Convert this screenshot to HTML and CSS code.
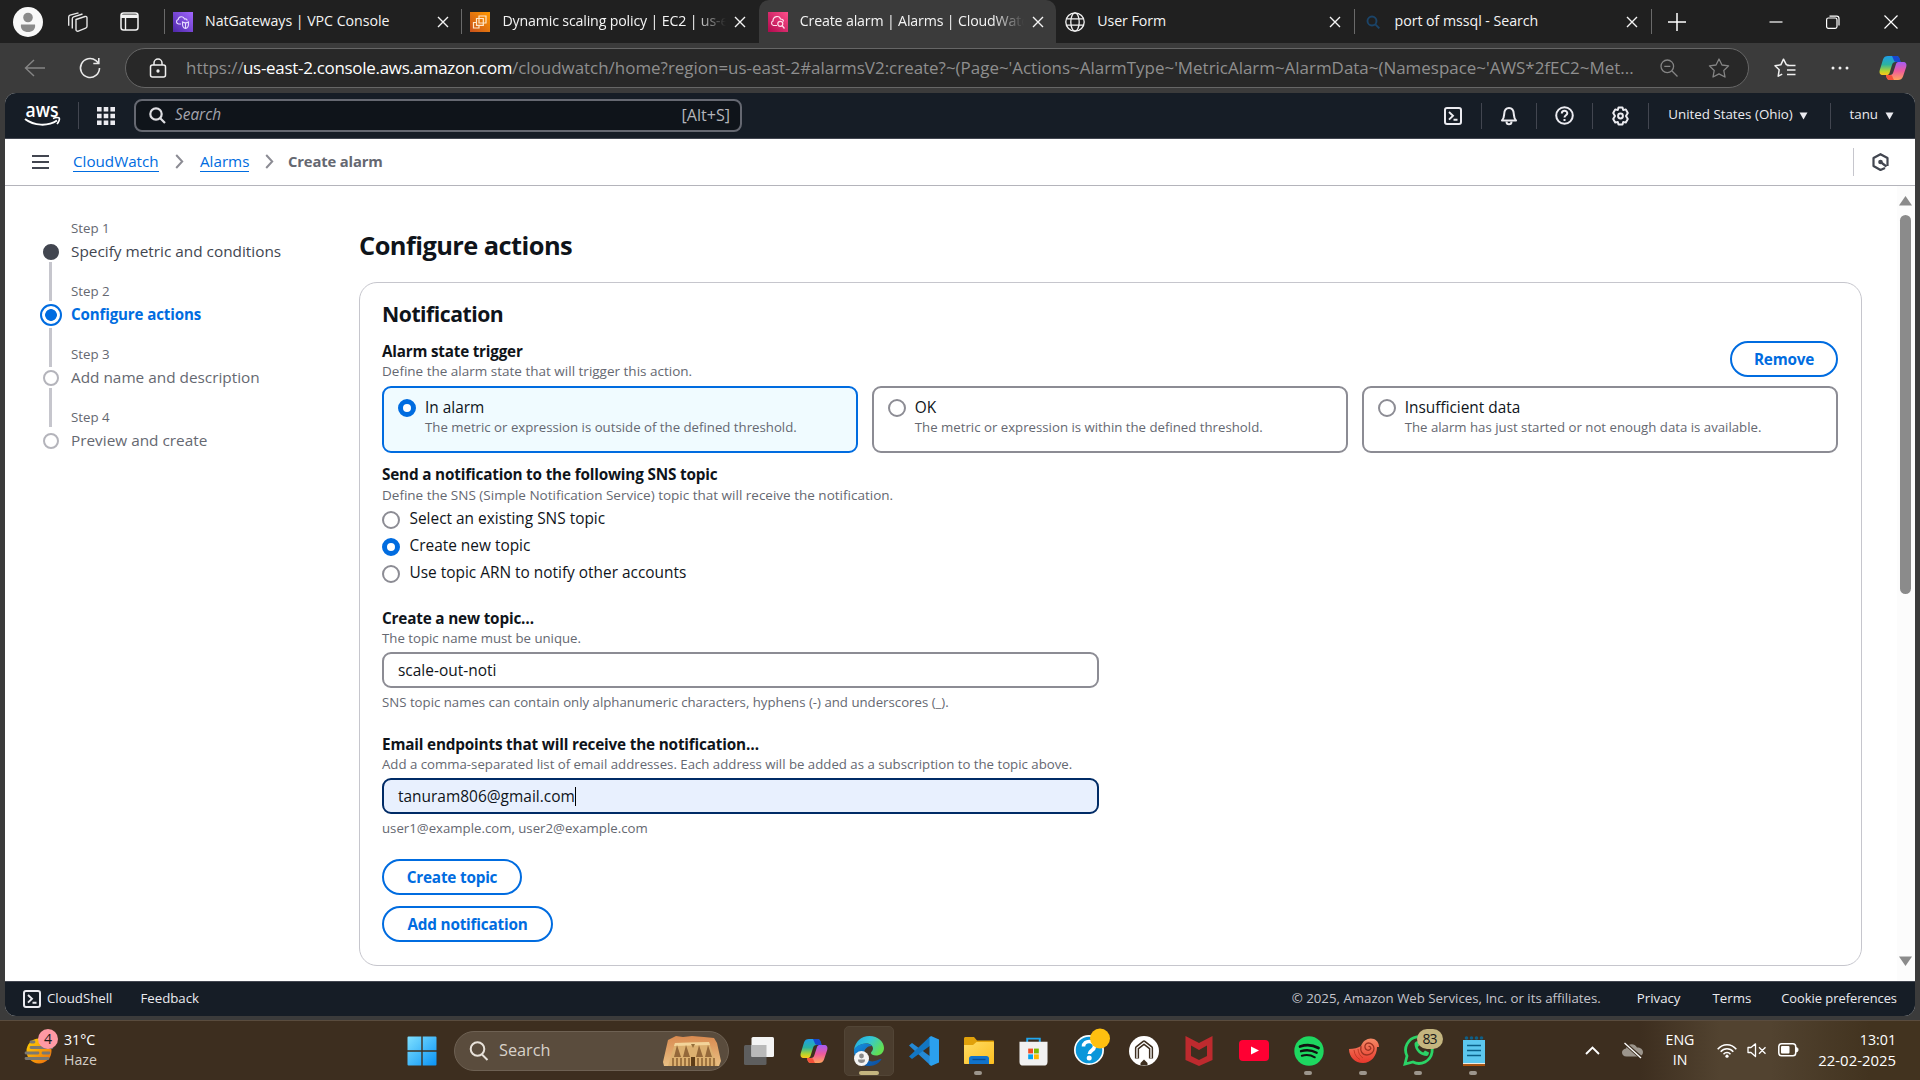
FILE: index.html
```html
<!DOCTYPE html>
<html lang="en">
<head>
<meta charset="utf-8">
<title>Create alarm | Alarms | CloudWatch</title>
<link rel="stylesheet" href="styles.css">
</head>
<body>
<svg class="defs" width="0" height="0" aria-hidden="true">
  <defs>
    <linearGradient id="cpA" x1="0" y1="0" x2="0" y2="1"><stop offset="0" stop-color="#1f9de8"/><stop offset=".45" stop-color="#2bb3a0"/><stop offset=".8" stop-color="#b8d52c"/><stop offset="1" stop-color="#ffc61a"/></linearGradient>
    <linearGradient id="cpB" x1="0" y1="0" x2="0" y2="1"><stop offset="0" stop-color="#a35cf5"/><stop offset=".5" stop-color="#ee5a9c"/><stop offset="1" stop-color="#ffa45c"/></linearGradient>
    <linearGradient id="vpc" x1="0" y1="1" x2="1" y2="0"><stop offset="0" stop-color="#4d27a8"/><stop offset="1" stop-color="#a166ff"/></linearGradient>
    <linearGradient id="ec2" x1="0" y1="1" x2="1" y2="0"><stop offset="0" stop-color="#c8511b"/><stop offset="1" stop-color="#ff9900"/></linearGradient>
    <linearGradient id="cw" x1="0" y1="1" x2="1" y2="0"><stop offset="0" stop-color="#b0084d"/><stop offset="1" stop-color="#ff4f8b"/></linearGradient>
    <linearGradient id="win" x1="0" y1="0" x2="1" y2="1"><stop offset="0" stop-color="#7fe0ff"/><stop offset="1" stop-color="#0a93f5"/></linearGradient>
    <linearGradient id="sun" x1="0" y1="0" x2="1" y2="1"><stop offset="0" stop-color="#ffd400"/><stop offset="1" stop-color="#ee6a10"/></linearGradient>
    <linearGradient id="edgeA" x1="0" y1="0" x2="1" y2=".5"><stop offset="0" stop-color="#1fa6e0"/><stop offset=".5" stop-color="#33c6d8"/><stop offset="1" stop-color="#62e052"/></linearGradient>
    <linearGradient id="edgeB" x1="0" y1="0" x2="1" y2="1"><stop offset="0" stop-color="#1590e0"/><stop offset="1" stop-color="#0c4a9c"/></linearGradient>
    <linearGradient id="fold" x1="0" y1="0" x2="1" y2="1"><stop offset="0" stop-color="#ffdc63"/><stop offset="1" stop-color="#fdbf20"/></linearGradient>
    <linearGradient id="shell" x1="0" y1="0" x2="0" y2="1"><stop offset="0" stop-color="#f58a66"/><stop offset="1" stop-color="#e8372c"/></linearGradient>
    <linearGradient id="rock" x1="0" y1="0" x2="0" y2="1"><stop offset="0" stop-color="#d98a50"/><stop offset="1" stop-color="#e9c084"/></linearGradient>
    <symbol id="x" viewBox="0 0 12 12"><path d="M1 1L11 11M11 1L1 11" fill="none" stroke="currentColor" stroke-width="1.400"/></symbol>
    <symbol id="caret" viewBox="0 0 10 9"><path d="M.5 .5h9L5 8.500z" fill="currentColor"/></symbol>
    <symbol id="terminal" viewBox="0 0 18 18"><rect x="1" y="1" width="16" height="16" rx="2" fill="none" stroke="currentColor" stroke-width="2"/><path d="M5 5l4 3.800L5 12.600M9.500 12.800h4" fill="none" stroke="currentColor" stroke-width="1.900"/></symbol>
    <symbol id="crumb" viewBox="0 0 9 15"><path d="M1.200 1l6 6.500-6 6.500" fill="none" stroke="#8c8c94" stroke-width="2"/></symbol>
    <symbol id="copilot" viewBox="0 0 28 26">
      <path d="M9 1h8c2 0 3 1 3.500 3l1 3h-5c-2 0-3 1-3.500 3l-2.500 8c-.5 1.500-1.500 2-3 2H4c-3 0-4-2-3.200-5L4 4.500C4.800 2 6.500 1 9 1z" fill="url(#cpA)"/>
      <path d="M13 1h4.500c1.800 0 2.800 1 3.300 3l.9 3h-4.500c-1.500 0-2.400-1-2.800-3z" fill="#1747cf"/>
      <path d="M19 25h-8c-2 0-3-1-3.500-3l-.6-2h4c2 0 3-1 3.500-3l2.600-8c.5-1.500 1.500-2 3-2h4c3 0 4 2 3.200 5L24 21.500c-.8 2.500-2.500 3.500-5 3.500z" fill="url(#cpB)"/>
      <path d="M15 25h-4c-2 0-3-1-3.500-3l-.6-2h4c2 0 2.600 1 3 3z" fill="#f4513a"/>
    </symbol>
  </defs>
</svg>

<div class="browser">
  <header class="tabstrip">
    <div class="strip-left">
      <svg class="avatar" width="30" height="30" viewBox="0 0 30 30"><circle cx="15" cy="15" r="15" fill="#f8f8f8"/><circle cx="15" cy="10.500" r="4.800" fill="#8a8a8a"/><path d="M8 17.500h14c1 5-3 7.500-7 7.500s-8-2.500-7-7.500z" fill="#8a8a8a"/></svg>
      <svg class="spaces" width="22" height="20" viewBox="0 0 22 20" fill="none" stroke="#e6e6e6" stroke-width="1.400"><path d="M9 7.500l9-3c1-.3 2 .2 2 1.300v8.500c0 1-.5 1.600-1.300 1.900l-7.400 2.900c-1.200.4-2.300-.2-2.300-1.400z"/><path d="M5.300 16.500V6.700c0-1 .5-1.500 1.300-1.800L15.500 2M1.700 13.800V5c0-1 .5-1.500 1.300-1.800L11.500.8"/></svg>
      <svg class="tabact" width="19" height="19" viewBox="0 0 19 19"><rect x="1" y="1" width="17" height="17" rx="2.500" fill="none" stroke="#f2f2f2" stroke-width="1.500"/><path d="M1 2.500h17v3.500H1z" fill="#f2f2f2"/><path d="M5.500 5v13" stroke="#f2f2f2" stroke-width="1.400"/></svg>
    </div>
    <div class="tab">
      <svg width="20" height="20" viewBox="0 0 20 20"><path d="M0 0h20v20H0z" fill="url(#vpc)"/><g fill="none" stroke="#e6dcff" stroke-width="1.100"><path d="M8 12H5.500a2.300 2.300 0 0 1-.3-4.500C5.500 4.500 10.500 3.500 11.500 7c1.500-.3 2.500.5 2.800 1.500"/><path d="M9.500 10c1.800 1 4.200 1 6 0v2c0 2.500-1 4-3 4.500-2-.5-3-2-3-4.500zM12.500 10.500V16"/></g></svg>
      <span class="tab-title">NatGateways | VPC Console</span>
      <svg class="tab-x" width="12" height="12"><use href="#x"/></svg>
    </div>
    <div class="tab">
      <svg width="20" height="20" viewBox="0 0 20 20"><path d="M0 0h20v20H0z" fill="url(#ec2)"/><g fill="none" stroke="#ffe7c9" stroke-width="1.200"><path d="M9 4h7v7H9z"/><path d="M6.500 6.500h6.800v6.800H6.500zM6 10.500H3.500V16H9v-2"/></g></svg>
      <span class="tab-title faded">Dynamic scaling policy | EC2 | us-e</span>
      <svg class="tab-x" width="12" height="12"><use href="#x"/></svg>
    </div>
    <div class="tab active">
      <svg width="20" height="20" viewBox="0 0 20 20"><path d="M0 0h20v20H0z" fill="url(#cw)"/><g fill="none" stroke="#ffe0ec" stroke-width="1.200"><path d="M9 13.500H5.500C3 13 3 9.500 5 9c0-5 6.500-6 7.500-2 2 0 3 1 3 2.500"/><circle cx="12.300" cy="11.800" r="2.500"/><path d="M14 13.500l2.500 3"/></g></svg>
      <span class="tab-title faded">Create alarm | Alarms | CloudWatc</span>
      <svg class="tab-x" width="12" height="12"><use href="#x"/></svg>
    </div>
    <div class="tab bare">
      <svg width="20" height="20" viewBox="0 0 20 20" fill="none" stroke="#f2f2f2" stroke-width="1.300"><circle cx="10" cy="10" r="9.200"/><ellipse cx="10" cy="10" rx="4.200" ry="9.200"/><path d="M1.500 6.800h17M1.500 13.200h17"/></svg>
      <span class="tab-title">User Form</span>
      <svg class="tab-x" width="12" height="12"><use href="#x"/></svg>
    </div>
    <div class="tab">
      <svg width="20" height="20" viewBox="0 0 20 20" fill="none" stroke="#1b4468" stroke-width="1.900"><circle cx="9" cy="9" r="4.500"/><path d="M12.300 12.300l4 4"/></svg>
      <span class="tab-title">port of mssql - Search</span>
      <svg class="tab-x" width="12" height="12"><use href="#x"/></svg>
    </div>
    <div class="strip-right">
      <svg width="18" height="18" viewBox="0 0 18 18" stroke="#fff" stroke-width="1.500"><path d="M9 0v18M0 9h18"/></svg>
      <svg class="wmin" width="14" height="14" viewBox="0 0 14 14" stroke="#fff" stroke-width="1.200"><path d="M.5 7h13"/></svg>
      <svg class="wmax" width="14" height="14" viewBox="0 0 14 14" fill="none" stroke="#fff" stroke-width="1.200"><rect x=".6" y="3" width="10.400" height="10.400" rx="1.800"/><path d="M3.500 1.200h7.200a2.300 2.300 0 0 1 2.300 2.300v7"/></svg>
      <svg class="wclose" width="14" height="14" viewBox="0 0 14 14" stroke="#fff" stroke-width="1.200"><path d="M.5.500l13 13M13.500.500l-13 13"/></svg>
    </div>
  </header>

  <div class="toolbar">
    <svg class="back" width="22" height="18" viewBox="0 0 22 18" fill="none" stroke="#858585" stroke-width="1.400"><path d="M21 9H1.500M10 1L1.500 9l8.500 8"/></svg>
    <svg class="reload" width="22" height="22" viewBox="0 0 22 22" fill="none" stroke="#e8e8e8" stroke-width="1.600"><path d="M20.500 11A9.500 9.500 0 1 1 17 3.600L19.500 6M19.800 1v5.500h-5.500"/></svg>
    <div class="address">
      <svg width="18" height="20" viewBox="0 0 18 20" fill="none" stroke="#f0f0f0" stroke-width="1.500"><rect x="1.500" y="7" width="15" height="12" rx="2"/><path d="M5 7V5a4 4 0 0 1 8 0v2"/><circle cx="9" cy="13" r=".9" fill="#f0f0f0"/></svg>
      <div class="url"><span class="scheme">https://</span><span class="host">us-east-2.console.aws.amazon.com</span><span class="path">/cloudwatch/home?region=us-east-2#alarmsV2:create?~(Page~'Actions~AlarmType~'MetricAlarm~AlarmData~(Namespace~'AWS*2fEC2~Met...</span></div>
      <svg class="zoomout" width="18" height="18" viewBox="0 0 18 18" fill="none" stroke="#858585" stroke-width="1.300"><circle cx="7.300" cy="7.300" r="6.300"/><path d="M12 12l5.500 5.500M4.300 7.300h6"/></svg>
      <svg class="star" width="22" height="20" viewBox="0 0 22 20" fill="none" stroke="#858585" stroke-width="1.300" stroke-linejoin="round"><path d="M11 1l3 6 6.600.9-4.800 4.600 1.200 6.500-6-3.100L5 19l1.200-6.500L1.400 7.900 8 7z"/></svg>
    </div>
    <svg class="favs" width="22" height="20" viewBox="0 0 22 20" fill="none" stroke="#f0f0f0" stroke-width="1.500" stroke-linejoin="round"><path d="M14.500 7L12.300 6.700 9.500 1.200 6.800 6.800 1 7.700l4.200 4-1 6.500 4-2M13 7.500h8.500M13 12h8.500M13 16.500h8.500"/></svg>
    <svg class="dots" width="18" height="4" viewBox="0 0 18 4" fill="#f0f0f0"><circle cx="2" cy="2" r="1.500"/><circle cx="9" cy="2" r="1.500"/><circle cx="16" cy="2" r="1.500"/></svg>
    <svg class="cop" width="28" height="26"><use href="#copilot"/></svg>
  </div>

  <div class="page">
    <nav class="aws-nav">
      <svg class="aws-logo" width="37" height="25" viewBox="0 0 37 25"><text x="1.500" y="13.500" class="aws-word" textLength="33" lengthAdjust="spacingAndGlyphs">aws</text><path d="M1 16c9 7 23 7.500 32 1.500" fill="none" stroke="#fff" stroke-width="2"/><path d="M29 15.500c3-1.500 6-1 6.300-.3.500 1-.5 4-2.300 5.800" fill="none" stroke="#fff" stroke-width="1.700"/></svg>
      <i class="vr vr-logo"></i>
      <svg class="grid9" width="18" height="18" viewBox="0 0 18 18" fill="#ebebf0"><path d="M0 0h4.600v4.600H0zM6.700 0h4.600v4.600H6.700zM13.400 0H18v4.600h-4.600zM0 6.700h4.600v4.600H0zM6.700 6.700h4.600v4.600H6.700zM13.400 6.700H18v4.600h-4.600zM0 13.400h4.600V18H0zM6.700 13.400h4.600V18H6.700zM13.400 13.400H18V18h-4.600z"/></svg>
      <div class="aws-search">
        <svg width="17" height="17" viewBox="0 0 17 17" fill="none" stroke="#dedee3" stroke-width="2.200"><circle cx="7" cy="7" r="5.700"/><path d="M11 11l5 5"/></svg>
        <span class="ph">Search</span><span class="kbd">[Alt+S]</span>
      </div>
      <div class="nav-right">
        <span class="cell c1"><svg width="18" height="18"><use href="#terminal"/></svg></span>
        <span class="cell"><svg width="18" height="20" viewBox="0 0 18 20" fill="none" stroke="currentColor" stroke-width="2"><path d="M2 14.500c2-2 2-3.500 2.200-6.500C4.400 4.500 6 2 9 2s4.600 2.500 4.800 6c.2 3 .2 4.500 2.200 6.500z" stroke-linejoin="round"/><path d="M6.500 15.500c0 3.800 5 3.800 5 0"/></svg></span>
        <span class="cell"><svg width="19" height="19" viewBox="0 0 19 19" fill="none" stroke="currentColor" stroke-width="2"><circle cx="9.500" cy="9.500" r="8.300"/><path d="M6.800 7.500c0-3.600 5.600-3.400 5.500-.2 0 2-2.800 2-2.800 4.200M9.500 13v2"/></svg></span>
        <span class="cell"><svg width="19" height="20" viewBox="0 0 19 20" fill="none" stroke="currentColor" stroke-width="2" stroke-linejoin="round"><path d="M7.500 1.500h4l.7 2.600 2.600-.7 2 3.500-1.800 3.100 1.800 3.100-2 3.500-2.600-.7-.7 2.600h-4l-.7-2.600-2.600.7-2-3.500L4 10 2.200 6.900l2-3.500 2.600.7z"/><circle cx="9.500" cy="10" r="2.400"/></svg></span>
        <span class="cell region"><b>United States (Ohio)</b><svg width="9" height="8"><use href="#caret"/></svg></span>
        <span class="cell user"><b>tanu</b><svg width="9" height="8"><use href="#caret"/></svg></span>
      </div>
    </nav>

    <div class="crumbs">
      <svg class="burger" width="17" height="16" viewBox="0 0 17 16" stroke="#424650" stroke-width="2"><path d="M0 2h17M0 8h17M0 14h17"/></svg>
      <a class="lk lk-cw">CloudWatch</a>
      <svg class="sep" width="9" height="15"><use href="#crumb"/></svg>
      <a class="lk lk-al">Alarms</a>
      <svg class="sep" width="9" height="15"><use href="#crumb"/></svg>
      <span class="here">Create alarm</span>
      <div class="crumb-tools"><svg width="17" height="18" viewBox="0 0 17 18" fill="none" stroke="#424650" stroke-width="2.200"><path d="M13 15l-4.500 2L1.500 13V5l7-3.800 7 3.800v8" stroke-linejoin="round"/><circle cx="8.500" cy="9" r="2.300" fill="#424650" stroke="none"/><path d="M8.500 9l6 4.500"/></svg></div>
    </div>

    <div class="body">
      <ol class="steps">
        <li class="step done"><i class="dot"></i><div><small>Step 1</small><span>Specify metric and conditions</span></div></li>
        <li class="step current"><i class="dot"></i><div><small>Step 2</small><span>Configure actions</span></div></li>
        <li class="step"><i class="dot"></i><div><small>Step 3</small><span>Add name and description</span></div></li>
        <li class="step"><i class="dot"></i><div><small>Step 4</small><span>Preview and create</span></div></li>
      </ol>

      <main class="main">
        <h1>Configure actions</h1>
        <section class="card">
          <h2>Notification</h2>
          <div class="row">
            <div>
              <div class="label trig">Alarm state trigger</div>
              <div class="hint h-a">Define the alarm state that will trigger this action.</div>
            </div>
            <button class="btn b-rm">Remove</button>
          </div>
          <div class="tiles">
            <div class="tile on"><i class="radio"></i><div><span class="opt">In alarm</span><span class="hint">The metric or expression is outside of the defined threshold.</span></div></div>
            <div class="tile"><i class="radio"></i><div><span class="opt">OK</span><span class="hint">The metric or expression is within the defined threshold.</span></div></div>
            <div class="tile"><i class="radio"></i><div><span class="opt">Insufficient data</span><span class="hint">The alarm has just started or not enough data is available.</span></div></div>
          </div>
          <div class="label gap-s">Send a notification to the following SNS topic</div>
          <div class="hint h-a">Define the SNS (Simple Notification Service) topic that will receive the notification.</div>
          <div class="options">
            <div class="choice"><i class="radio"></i><span class="opt">Select an existing SNS topic</span></div>
            <div class="choice on"><i class="radio"></i><span class="opt">Create new topic</span></div>
            <div class="choice"><i class="radio"></i><span class="opt">Use topic ARN to notify other accounts</span></div>
          </div>
          <div class="label gap-l">Create a new topic…</div>
          <div class="hint">The topic name must be unique.</div>
          <div class="input">scale-out-noti</div>
          <div class="hint under">SNS topic names can contain only alphanumeric characters, hyphens (-) and underscores (_).</div>
          <div class="label gap-l">Email endpoints that will receive the notification…</div>
          <div class="hint">Add a comma-separated list of email addresses. Each address will be added as a subscription to the topic above.</div>
          <div class="input focus">tanuram806@gmail.com<i class="cursor"></i></div>
          <div class="hint under">user1@example.com, user2@example.com</div>
          <div class="actions">
            <button class="btn b-ct">Create topic</button>
            <button class="btn b-an">Add notification</button>
          </div>
        </section>
      </main>

      <div class="scroll">
        <svg width="13" height="10" viewBox="0 0 13 10"><path d="M6.500 0L13 9.500H0z" fill="#8b8b8b"/></svg>
        <i class="thumb"></i>
        <svg class="down" width="13" height="10" viewBox="0 0 13 10"><path d="M6.500 10L13 .5H0z" fill="#8b8b8b"/></svg>
      </div>
    </div>

    <footer class="foot">
      <svg width="18" height="18"><use href="#terminal"/></svg>
      <span class="cs">CloudShell</span>
      <span class="fb">Feedback</span>
      <span class="copy">© 2025, Amazon Web Services, Inc. or its affiliates.</span>
      <span class="pv">Privacy</span>
      <span class="tm">Terms</span>
      <span class="ck">Cookie preferences</span>
    </footer>
  </div>
</div>

<div class="taskbar">
  <div class="weather">
    <svg width="36" height="36" viewBox="0 0 36 36"><ellipse cx="15" cy="22" rx="12.500" ry="12.500" fill="url(#sun)"/><g stroke="#7b7872" stroke-width="2.800" stroke-linecap="round"><path d="M7 13h3M7 18.500h21M2 24h12M19 24h6M2 29.500h22"/></g><circle cx="24" cy="10" r="10" fill="#ff99a4"/><text x="24" y="15" class="badge-t" text-anchor="middle">4</text></svg>
    <div class="two"><span>31°C</span><span class="dim">Haze</span></div>
  </div>
  <svg class="start" width="30" height="30" viewBox="0 0 30 30" fill="url(#win)"><path d="M1.500.5H14.300V14.300H.5V1.500a1 1 0 0 1 1-1zM15.700.5h12.800a1 1 0 0 1 1 1v12.800H15.700zM.5 15.700h13.800v13.800H1.500a1 1 0 0 1-1-1zM15.700 15.700h13.800v12.800a1 1 0 0 1-1 1H15.700z"/></svg>
  <div class="tsearch">
    <svg width="20" height="20" viewBox="0 0 20 20" fill="none" stroke="#e8e2da" stroke-width="2"><circle cx="8.500" cy="8" r="6.800"/><path d="M13 13.500l5.500 5.500"/></svg>
    <span>Search</span>
    <svg class="petra" width="60" height="32" viewBox="0 0 60 32"><path d="M1 27L6 5l8-4 7 1 9-1 12 1 10 1 3 5 4 18-2 5H2z" fill="url(#rock)"/><path d="M13 8l34-1 8 24H6z" fill="#dcb070"/><path d="M13 8l34-1 1 3-36 1z" fill="#f3d49a"/><path d="M12 22l3-12 4 12zM21 22l3-12 4 12zM34 22l3-12 4 12zM43 22l3-12 4 12z" fill="#94683a"/><path d="M29 9l2 4 2-4z" fill="#96703c"/><g stroke="#8a6030" stroke-width="1.500"><path d="M11 23v8M15 23v8M19 23v8M23 23v8M27 23v8M36 23v8M40 23v8M44 23v8M48 23v8M52 23v8"/></g><path d="M29 22h4v9h-4z" fill="#5e3d18"/></svg>
  </div>
  <div class="apps">
    <div class="app"><svg width="30" height="28" viewBox="0 0 30 28"><rect y="8" width="22.500" height="20" rx="1.500" fill="#5e5e5e"/><rect x="7.500" width="22.500" height="20" rx="1.500" fill="#f4f4f4"/><path d="M7.500 8h15v12h-15z" fill="#b9b9b9"/></svg></div>
    <div class="app"><svg width="28" height="26"><use href="#copilot"/></svg></div>
    <div class="app sel"><div class="plate"><svg width="32" height="30" viewBox="0 0 32 30"><path d="M1 14C2 6 8 0 16.500 0 25 0 31 6 31 12c0 5-4 7.500-8 7.500-3 0-5-1-5-2.500s2-2 2-4.500c0-3-3-5-7-5-5 0-10 3-12 6.500z" fill="url(#edgeA)"/><path d="M1 14c2-4 7-6.500 12-6.500 3 0 5 1 6 2.500-4-.5-8 3-8 7.500 0 6 6 9 11 7.500 3-.8 5-2.500 6.500-2C26.500 27 22 30 16 30 7 30 .5 23 1 14z" fill="url(#edgeB)"/><circle cx="8.500" cy="22.500" r="7.500" fill="#f5f5f5"/><circle cx="8.500" cy="20" r="2.400" fill="#8a8a8a"/><path d="M5 23.500h7c.4 2.500-1.500 3.500-3.500 3.500S4.600 26 5 23.500z" fill="#8a8a8a"/></svg></div><i class="bar"></i></div>
    <div class="app"><svg width="30" height="30" viewBox="0 0 30 30"><path d="M0 9.500L3 7l19 14v7.500L21 29z" fill="#2489d6"/><path d="M0 20.500L3 23 22 9V1l-1-.5z" fill="#1376c2"/><path d="M22 0l8 3.500v23L22 30l-1.500-1.500V1.500z" fill="#2ba0ee"/></svg></div>
    <div class="app run"><svg width="30" height="27" viewBox="0 0 30 27"><path d="M0 1.500C0 .6.600 0 1.500 0H10l3 3.500H29c.6 0 1 .4 1 1V10H0z" fill="#e1a10a"/><path d="M0 8h9l3.500-3H29c.6 0 1 .4 1 1v20c0 .6-.4 1-1 1H1c-.6 0-1-.4-1-1z" fill="url(#fold)"/><path d="M5 27v-5.500c0-1.500 1-2.500 2.500-2.500h15c1.500 0 2.500 1 2.500 2.500V27z" fill="#1173cb"/><path d="M8.500 22.500h13" stroke="#0a4d91" stroke-width="1.300"/></svg></div>
    <div class="app"><svg width="29" height="30" viewBox="0 0 30 30"><path d="M8.500 7V2.200h13V7" fill="none" stroke="#20a7ef" stroke-width="2"/><path d="M.5 5.500h29V26a4 4 0 0 1-4 4h-21a4 4 0 0 1-4-4z" fill="#f1f1f1"/><path d="M9.500 12.500h5v5h-5z" fill="#f04e24"/><path d="M15.500 12.500h5v5h-5z" fill="#7db900"/><path d="M9.500 18.500h5v5h-5z" fill="#03a3ee"/><path d="M15.500 18.500h5v5h-5z" fill="#feb800"/></svg></div>
    <div class="app"><svg class="help" width="38" height="38" viewBox="0 0 38 38"><circle cx="17" cy="22" r="15" fill="#fff"/><circle cx="17" cy="22" r="13.300" fill="#0a97da"/><path d="M11.500 18.500c0-7 11.500-6.500 11 0-.3 4-5.200 4-5.200 7.500" fill="none" stroke="#fff" stroke-width="3.600"/><circle cx="17.200" cy="30" r="2.500" fill="#fff"/><circle cx="28" cy="10.500" r="10" fill="#ffc010"/></svg></div>
    <div class="app"><svg width="30" height="30" viewBox="0 0 30 30"><circle cx="15" cy="15" r="15" fill="#fff"/><path d="M8 22.500V12l7-5.500 7 5.500v10.500" fill="none" stroke="#3d2e1f" stroke-width="4.200" stroke-linejoin="round"/><path d="M8 22V12l7-5.500 7 5.500v10" fill="none" stroke="#fff" stroke-width="1.300"/><path d="M11.500 27l3.500-3.500 3.500 3.500v2.500h-7z" fill="#3d2e1f"/></svg></div>
    <div class="app"><svg width="28" height="30" viewBox="0 0 28 30"><path d="M.5 0L14 7 27.500 0v24L14 30 .5 24zM6 9.500V20l8 4 8-4V9.500L14 14z" fill="#be2a2e" fill-rule="evenodd"/></svg></div>
    <div class="app"><svg width="30" height="21" viewBox="0 0 30 21"><rect width="30" height="21" rx="4" fill="#ff0033"/><path d="M12 6.500l8 4-8 4z" fill="#fff"/></svg></div>
    <div class="app run"><svg width="30" height="30" viewBox="0 0 30 30"><circle cx="15" cy="15" r="14.700" fill="#1ed760"/><g fill="none" stroke="#111" stroke-linecap="round"><path d="M6 10.500c6-2 13-1.500 18.500 1.500" stroke-width="2.700"/><path d="M7 15.200c5-1.500 11-1 15.700 1.600" stroke-width="2.300"/><path d="M7.800 19.800c4.500-1.200 9-.8 13 1.500" stroke-width="2"/></g></svg></div>
    <div class="app run"><svg width="30" height="26" viewBox="0 0 30 26"><path d="M0 11c5 0 9-1 12-3 2-6 8-9 13-7 4 2 5 5 5 8h-2c0 9-6 16-14 16C6 25 0 19 0 11z" fill="url(#shell)"/><path d="M12 8c-1 5 1 9 6 9 4 0 7-3 7-6.500S22 5 19.500 5 15.500 7 16 9.500 19 13 21 11.500 21 8 19.500 8.500" fill="none" stroke="#9c3322" stroke-width="1.300"/><path d="M5 12c.5 5 3 8 6 9.500M9 11c.3 4 2 7 5 9" stroke="#c33a26" stroke-width="1" fill="none"/></svg></div>
    <div class="app run"><svg class="wa" width="40" height="37" viewBox="0 0 40 37"><path d="M2 35l2-8A13.300 13.300 0 1 1 10 33z" fill="none" stroke="#2bd366" stroke-width="2.800"/><path d="M11.500 14.500c0 7 6 12.500 12.500 12.500 1-.5 2-2 2-3.500l-4-2-1.800 2c-2.500-1-4.500-3-5.500-5.500l1.800-1.700-1.500-4c-1.500 0-3 .5-3.500 2.200z" fill="#2bd366"/><rect x="14" y="0" width="26" height="20" rx="10" fill="#c4b57f"/><text x="27" y="15" class="badge-t" text-anchor="middle" textLength="15">83</text></svg></div>
    <div class="app run"><svg width="22" height="30" viewBox="0 0 22 30"><path d="M0 4h22v23H0z" fill="#5cc7ee"/><path d="M0 27h22v1.300H0z" fill="#f2e9dd"/><path d="M0 28.300h22V30H0z" fill="#b4530a"/><path d="M4 9.500h14M4 14.500h14M4 19.500h14" stroke="#0a5f88" stroke-width="1.700"/><g fill="#0f5f86"><circle cx="3.500" cy="2" r="1.800"/><circle cx="8.500" cy="2" r="1.800"/><circle cx="13.500" cy="2" r="1.800"/><circle cx="18.500" cy="2" r="1.800"/></g></svg></div>
  </div>
  <div class="tray">
    <svg class="up" width="15" height="9" viewBox="0 0 15 9" fill="none" stroke="#fff" stroke-width="1.900"><path d="M1 8l6.500-6.500L14 8"/></svg>
    <svg class="od" width="21" height="17" viewBox="0 0 21 17"><path d="M4.500 14.500C1.500 14.500 0 12.500 0 10.500S1.500 7 4 6.500C5 2 12 0 15 5.500c3.500 0 6 2 6 4.700 0 2.500-2 4.300-4.500 4.300z" fill="#9c958c"/><path d="M2.500 1l17 15" stroke="#3d2e1f" stroke-width="3.500"/><path d="M2.500 1l16.500 15" stroke="#fff" stroke-width="1.300"/></svg>
    <div class="two lang"><span>ENG</span><span>IN</span></div>
    <svg class="wifi" width="20" height="15" viewBox="0 0 20 15" fill="none" stroke="#fff" stroke-width="1.500"><path d="M.7 6.200c5-6 13.600-6 18.600 0M3.700 8.800c3.500-4 9.100-4 12.600 0M6.500 11.200c2-2.200 5-2.200 7 0"/><circle cx="10" cy="13.200" r="1.600" fill="#fff" stroke="none"/></svg>
    <svg class="mute" width="20" height="14" viewBox="0 0 20 14" fill="none" stroke="#fff" stroke-width="1.300" stroke-linejoin="round"><path d="M1 4.500v5h3l4.500 4V.8L4 4.500zM12 4.200l6.500 6.500M18.500 4.200L12 10.700"/></svg>
    <svg class="bat" width="21" height="14" viewBox="0 0 21 14"><rect x=".8" y=".8" width="16.900" height="11.900" rx="2.800" fill="none" stroke="#fff" stroke-width="1.500"/><rect x="3" y="3" width="8.500" height="7.500" rx="1" fill="#fff"/><path d="M18.500 4.500c2 0 2 4.500 0 4.500z" fill="#fff" stroke="#fff"/></svg>
    <div class="two clock"><span>13:01</span><span class="date">22-02-2025</span></div>
  </div>
</div>
</body>
</html>
```
FILE: styles.css
```css
* { box-sizing: border-box; }
body {
  margin: 0;
  width: 1920px;
  height: 1080px;
  overflow: hidden;
  font-family: "Open Sans", "Noto Sans", sans-serif;
  color: #0f141a;
  background: #3d2e1f;
}
svg { display: block; flex: none; overflow: visible; }
i { display: block; flex: none; }
.defs { position: absolute; }
.browser { height: 1020px; background: #3b3b3b; }

/* tab strip */
.tabstrip { display: flex; height: 43px; background: #202020; color: #f4f4f4; }
.strip-left { width: 164px; display: flex; align-items: center; padding-left: 13px; }
.spaces { margin-left: 24px; }
.tabact { margin-left: 31px; }
.tab {
  width: 297.400px;
  display: flex;
  align-items: center;
  padding: 0 12.500px 0 9px;
  font-size: 14.200px;
  background: linear-gradient(#6a6a6a, #6a6a6a) 0 50% / 1px 25px no-repeat;
}
.tab-title { flex: 1; min-width: 0; margin: -2px 8px 0 12px; white-space: nowrap; line-height: 22px; letter-spacing: -.04px; }
.faded { letter-spacing: -.16px; -webkit-mask-image: linear-gradient(90deg, #000 86%, transparent); mask-image: linear-gradient(90deg, #000 86%, transparent); }
.tab-x { margin-top: 1px; }
.tab.bare { background: none; }
.tab.active { background: #3b3b3b; border-radius: 10px 10px 0 0; }
.strip-right { flex: 1; display: flex; align-items: center; padding-left: 17px; background: linear-gradient(#6a6a6a, #6a6a6a) 0 50% / 1px 25px no-repeat; }
.wmin { margin-left: 83px; }
.wmax { margin-left: 43px; }
.wclose { margin-left: 44px; }

/* toolbar */
.toolbar { display: flex; align-items: center; height: 50px; }
.back { margin-left: 24px; }
.reload { margin-left: 33px; }
.address {
  width: 1624px;
  height: 40px;
  margin-left: 24px;
  border: 1px solid #666;
  border-radius: 20px;
  background: #282828;
  display: flex;
  align-items: center;
  padding-left: 23px;
}
.url { width: 1448px; margin: -1px 0 0 19px; display: flex; align-items: baseline; white-space: nowrap; font-size: 16.950px; color: #8f8f8f; }
.scheme { width: 57px; }
.host { width: 269px; color: #fff; letter-spacing: -.28px; }
.zoomout { margin-left: 26px; }
.star { margin-left: 30px; }
.favs { margin-left: 25px; }
.dots { margin-left: 35px; }
.cop { margin-left: 30px; }

/* page */
.page { margin: 0 5px; height: 923px; border-radius: 11px; overflow: hidden; background: #fff; display: flex; flex-direction: column; }
.aws-nav { height: 46px; background: #161d26; border-bottom: 1px solid #424650; display: flex; align-items: center; color: #ebebf0; }
.aws-logo { margin: -1px 0 0 19px; }
.aws-word { font-size: 19px; font-weight: 600; fill: #fff; }
.vr { width: 1px; height: 27px; background: #424650; }
.vr-logo { margin-left: 17px; }
.grid9 { margin-left: 18px; }
.aws-search { width: 608px; height: 33px; margin-left: 19px; border: 2px solid #656871; border-radius: 8px; background: #0f141a; display: flex; align-items: center; padding: 0 10px 0 13px; }
.ph { flex: 1; margin: -2px 0 0 9px; font-size: 15.400px; font-style: italic; color: #a4a4ad; }
.kbd { font-size: 16.100px; margin-top: -1px; color: #b4b4bb; }
.nav-right { margin-left: auto; display: flex; align-items: center; }
.cell { width: 55.600px; height: 26px; display: flex; align-items: center; justify-content: center; border-left: 1px solid #424650; }
.cell b { font-weight: 500; font-size: 13.350px; margin-top: -3px; white-space: nowrap; }
.c1 { border-left: 0; }
.region { width: 182px; gap: 6px; padding-right: 2px; }
.user { width: 85.500px; gap: 7px; justify-content: flex-start; padding-left: 19px; }

.crumbs { height: 47px; border-bottom: 1px solid #b4b4bb; display: flex; align-items: center; padding-left: 27px; font-size: 15.200px; }
.burger { margin-top: -1px; }
.lk { color: #006ce0; line-height: 20px; margin-top: -1px; border-bottom: 1px solid #006ce0; white-space: nowrap; }
.lk-cw { margin-left: 24px; width: 86px; }
.lk-al { width: 49px; }
.sep { margin: -2px 16px 0; }
.here { color: #656871; font-weight: 700; font-size: 14.800px; letter-spacing: -.15px; margin: -2px 0 0 -2px; }
.crumb-tools { margin-left: auto; width: 62px; height: 28px; border-left: 1px solid #c6c6cd; display: flex; align-items: center; padding-left: 18px; }

.body { flex: 1; display: flex; min-height: 0; }
.steps { list-style: none; margin: 0; padding: 33px 0 0 34px; width: 354px; }
.step { display: flex; height: 63px; position: relative; }
.step > div { margin-left: 10px; }
.step small { display: block; font-size: 13.300px; line-height: 18px; color: #656871; }
.step span { display: block; font-size: 15.350px; line-height: 22.500px; margin-top: 2.500px; color: #656871; white-space: nowrap; }
.step .dot { width: 16px; height: 16px; margin: 25px 2.500px 0 3.500px; border: 2px solid #b4b4bb; border-radius: 50%; }
.step:not(:last-child)::after { content: ""; position: absolute; left: 10px; top: 43px; width: 3px; height: 39px; background: #c6c6cd; }
.step.done .dot { background: #424650; border-color: #424650; }
.step.done span { color: #424650; }
.step.current .dot { width: 22px; height: 22px; margin: 22px -.5px 0 .5px; border-color: #006ce0; background: radial-gradient(circle, #006ce0 5.500px, transparent 6.200px); }
.step.current::after { top: 46px; height: 39px; }
.step.current span { color: #006ce0; font-weight: 700; font-size: 15.100px; letter-spacing: -.13px; }

.main { width: 1503px; padding-top: 42px; }
h1 { margin: 0; font-size: 25.400px; font-weight: 700; letter-spacing: -.55px; line-height: 34px; }
.card { margin-top: 20px; height: 684px; border: 1px solid #c6c6cd; border-radius: 18px; padding: 17px 23px 0 22px; }
h2 { margin: 0; font-size: 21.200px; font-weight: 700; letter-spacing: -.48px; line-height: 27px; }
.row { display: flex; margin-top: 12.500px; height: 46px; justify-content: space-between; }
.label { font-size: 15.300px; font-weight: 700; letter-spacing: -.18px; line-height: 22.500px; }
.trig { font-size: 15.200px; }
.hint { display: block; font-size: 13.230px; line-height: 18px; color: #656871; white-space: nowrap; }
.h-a { font-size: 13.500px; }
.btn { height: 36px; border: 2px solid #006ce0; border-radius: 18px; background: #fff; color: #006ce0; font: 700 15.300px/28px "Open Sans", sans-serif; letter-spacing: -.2px; padding: 0; white-space: nowrap; display: block; }
.b-rm { width: 108px; margin-top: 1px; }
.b-ct { width: 140px; }
.b-an { width: 171px; margin-top: 11px; }
.tiles { display: grid; grid-template-columns: repeat(3, 1fr); gap: 13.500px; }
.tile { height: 67px; border: 2px solid #8c8c94; border-radius: 9px; padding: 9px 0 0 14px; display: flex; }
.tile > div { margin-left: 9px; }
.opt { display: block; font-size: 15.420px; line-height: 22.500px; }
.tile .hint { margin-top: -1px; }
.tile.on { border-color: #006ce0; background: #f0fbff; }
.radio { width: 18px; height: 18px; margin-top: 2px; border: 2px solid #8c8c94; border-radius: 50%; background: #fff; }
.on > .radio { border: 5px solid #006ce0; }
.gap-s { margin-top: 10.500px; }
.options { margin-top: 4.500px; display: grid; gap: 4.500px; }
.choice { display: flex; gap: 9.500px; }
.choice .radio { margin-top: 3px; }
.gap-l { margin-top: 22px; }
.input { width: 717px; height: 36px; margin-top: 5px; border: 2px solid #8c8c94; border-radius: 9px; padding: 0 14px; font-size: 15.460px; display: flex; align-items: center; }
.input.focus { border-color: #002b66; background: #e8f0fe; }
.cursor { width: 1px; height: 19px; background: #000; }
.under { margin-top: 4.500px; }
.actions { margin-top: 22.500px; }

.scroll { margin-left: auto; width: 18px; background: #fcfcfc; display: flex; flex-direction: column; align-items: center; padding: 10px 2px 15px 0; }
.thumb { width: 11px; height: 379px; margin-top: 9px; border-radius: 5.500px; background: #8b8b8b; }
.down { margin-top: auto; }

.foot { height: 35px; background: #161d26; border-top: 1px solid #424650; display: flex; align-items: center; padding: 0 18px; color: #ebebf0; font-size: 13.250px; white-space: nowrap; }
.foot span { margin-top: -2px; }
.cs { margin-left: 6px; }
.fb { margin-left: 28px; }
.foot .copy { margin-left: auto; color: #c6c6cd; }
.pv { margin-left: 36px; }
.tm { margin-left: 32px; }
.ck { margin-left: 30px; font-size: 12.850px; }

/* taskbar */
.taskbar { height: 60px; border-top: 1px solid #5a4c3e; background: linear-gradient(90deg, #3d2e1f 0, #3d2e1f 1640px, #524330 1720px, #524330 1770px, #42331f 1870px, #42331f 100%); display: flex; align-items: center; color: #fff; }
.weather { width: 407px; padding-left: 24px; display: flex; align-items: center; }
.weather svg { margin-top: -8px; }
.two { display: flex; flex-direction: column; margin-top: -1px; font-size: 14.200px; line-height: 20px; white-space: nowrap; }
.weather .two { margin-left: 4px; }
.dim { color: #d3cdc6; }
.badge-t { font-size: 14px; fill: #1a1a1a; }
.tsearch { width: 275px; height: 40px; margin-left: 17px; border: 1px solid #6e6153; border-radius: 20px; background: #5a4c3d; display: flex; align-items: center; padding-left: 14px; font-size: 16.300px; color: #d8d2ca; }
.tsearch span { margin: -1px 0 0 10px; width: 163px; }
.apps { display: flex; margin-left: 2px; }
.app { width: 55px; height: 50px; display: flex; align-items: center; justify-content: center; position: relative; }
.plate { width: 50px; height: 50px; border-radius: 5px; border: 1px solid #524536; background: #4b3d2e; display: flex; align-items: center; justify-content: center; }
.bar { position: absolute; bottom: 1px; left: 18px; width: 20px; height: 4px; border-radius: 2px; background: #c4b57f; }
.run::after { content: ""; position: absolute; bottom: 1px; left: 23px; width: 8px; height: 4px; border-radius: 2px; background: #9c958c; }
.help { margin: -7px 0 0 5px; }
.wa { margin: -7px 0 0 9px; }
.tray { flex: 1; display: flex; align-items: center; }
.tray > svg { margin-top: -1px; }
.up { margin-left: 84px; }
.od { margin-left: 22px; }
.lang { width: 40px; margin-left: 17px; align-items: center; }
.wifi { margin-left: 17px; }
.mute { margin-left: 10px; }
.bat { margin-left: 11px; }
.clock { margin-left: auto; margin-right: 24px; align-items: flex-end; }
.date { font-size: 14.900px; }
```
